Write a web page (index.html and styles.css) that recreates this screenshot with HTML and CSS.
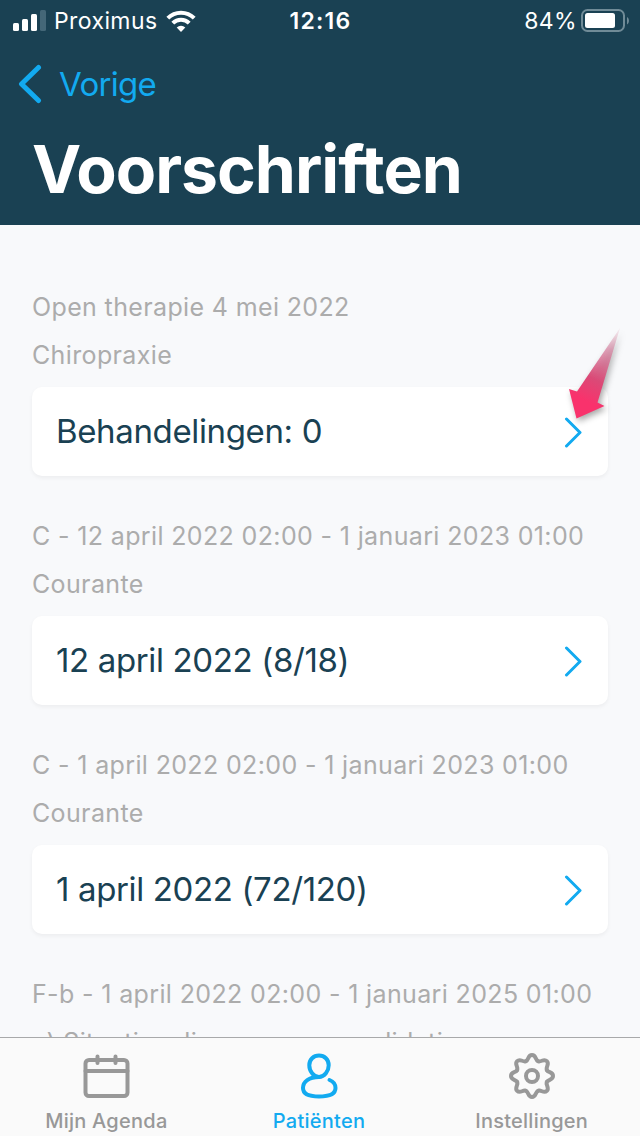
FILE: index.html
```
<!DOCTYPE html>
<html lang="nl">
<head>
  <meta charset="UTF-8">
  <meta name="viewport" content="width=device-width, initial-scale=1.0">
  <title>Voorschriften</title>
  <link rel="stylesheet" href="styles.css">
</head>
<body>
  <header class="header">
    <div class="status-bar">
      <div class="status-left">
        <svg class="signal" width="34" height="22" viewBox="0 0 34 22">
          <rect x="0" y="13" width="6" height="8" rx="1.5"/>
          <rect x="9" y="9" width="6" height="12" rx="1.5"/>
          <rect x="18" y="4" width="6" height="17" rx="1.5"/>
          <rect class="dim" x="27" y="0" width="6" height="21" rx="1.5"/>
        </svg>
        <span class="carrier">Proximus</span>
        <svg class="wifi" width="30" height="22" viewBox="0 0 30 22">
          <path class="wave" d="M1.8 8.2a18.6 18.6 0 0 1 26.4 0"/>
          <path class="wave" d="M6.8 13.2a11.6 11.6 0 0 1 16.4 0"/>
          <path d="M15 22l-4.3-4.4a6.2 6.2 0 0 1 8.6 0z"/>
        </svg>
      </div>
      <span class="time">12:16</span>
      <div class="status-right">
        <span class="percent">84%</span>
        <svg class="battery" width="49" height="24" viewBox="0 0 49 24">
          <rect class="shell" x="1" y="1" width="42" height="21" rx="5.5"/>
          <rect x="4" y="4" width="30" height="15" rx="2.5"/>
          <path class="cap" d="M46 8c2.6 1.5 2.6 6 0 7.500z"/>
        </svg>
      </div>
    </div>
    <a href="#" class="back">
      <svg width="24" height="40" viewBox="0 0 24 40">
        <path d="M20.500 3.500L3.500 20l17 16.500"/>
      </svg>
      <span>Vorige</span>
    </a>
    <h1>Voorschriften</h1>
  </header>

  <main class="content">
    <section class="prescription">
      <p>Open therapie 4 mei 2022</p>
      <p>Chiropraxie</p>
      <a href="#" class="card">
        <span>Behandelingen: 0</span>
        <svg class="chevron" width="20" height="32" viewBox="0 0 20 32"><path d="M3.500 3L17 16.500 3.500 30"/></svg>
        <!-- pointer to the open button -->
        <svg class="pointer" width="70" height="110" viewBox="0 0 70 110">
          <defs>
            <linearGradient id="fade" gradientUnits="userSpaceOnUse" x1="60" y1="8" x2="20" y2="94">
              <stop offset="0" stop-color="#d08aa0" stop-opacity="0.1"/>
              <stop offset="0.25" stop-color="#d5799a" stop-opacity="0.65"/>
              <stop offset="0.6" stop-color="#da4a77"/>
              <stop offset="0.85" stop-color="#f9326c"/>
            </linearGradient>
          </defs>
          <path d="M60 8L37.500 82.500l7 3.500L16.500 98.500 9 69l8 2.500z"/>
        </svg>
      </a>
    </section>

    <section class="prescription">
      <p>C - 12 april 2022 02:00 - 1 januari 2023 01:00</p>
      <p>Courante</p>
      <a href="#" class="card">
        <span>12 april 2022 (8/18)</span>
        <svg class="chevron" width="20" height="32" viewBox="0 0 20 32"><path d="M3.500 3L17 16.500 3.500 30"/></svg>
      </a>
    </section>

    <section class="prescription">
      <p>C - 1 april 2022 02:00 - 1 januari 2023 01:00</p>
      <p>Courante</p>
      <a href="#" class="card">
        <span>1 april 2022 (72/120)</span>
        <svg class="chevron" width="20" height="32" viewBox="0 0 20 32"><path d="M3.500 3L17 16.500 3.500 30"/></svg>
      </a>
    </section>

    <section class="prescription">
      <p>F-b - 1 april 2022 02:00 - 1 januari 2025 01:00</p>
      <p>a) Situaties die een gangrevalidatie</p>
    </section>
  </main>

  <nav class="tab-bar">
    <a href="#" class="tab">
      <svg width="48" height="48" viewBox="0 0 48 48">
        <rect x="3.500" y="8" width="42" height="36" rx="3.500"/>
        <path d="M3.500 19h42M15.500 4.500v6.500M33.500 4.500v6.500"/>
      </svg>
      <span>Mijn Agenda</span>
    </a>
    <a href="#" class="tab active">
      <svg width="48" height="48" viewBox="0 0 48 48">
        <path d="M24 25C14 25 8 29.500 8 36C8 42 13 44.500 24 44.500S40.500 42 40.500 36C40.500 32.500 38.500 29.500 34.500 28"/>
        <path d="M24 25C18.500 25 14.300 19 14.300 13.200C14.300 7.500 18.500 3.500 24 3.500S33.700 7.500 33.700 13.200C33.700 19 29.500 25 24 25z"/>
      </svg>
      <span>Patiënten</span>
    </a>
    <a href="#" class="tab">
      <svg width="48" height="48" viewBox="-24 -24 48 48">
        <defs><path id="tooth" d="M-6.100 -14.800C-3.100 -16 -4.300 -21 0 -21S3.100 -16 6.100 -14.800"/></defs>
        <use href="#tooth"/>
        <use href="#tooth" transform="rotate(45)"/>
        <use href="#tooth" transform="rotate(90)"/>
        <use href="#tooth" transform="rotate(135)"/>
        <use href="#tooth" transform="rotate(180)"/>
        <use href="#tooth" transform="rotate(225)"/>
        <use href="#tooth" transform="rotate(270)"/>
        <use href="#tooth" transform="rotate(315)"/>
        <circle r="6"/>
      </svg>
      <span>Instellingen</span>
    </a>
  </nav>
</body>
</html>
```
FILE: styles.css
```
* {
  box-sizing: border-box;
}
body {
  display: flex;
  flex-direction: column;
  height: 1136px;
  margin: 0;
  overflow: hidden;
  font-family: Inter, "Liberation Sans", sans-serif;
  background-color: #f8f9fb;
}
a {
  text-decoration: none;
}
svg {
  flex-shrink: 0;
}
.header {
  height: 225px;
  flex-shrink: 0;
  background-color: #1a4153;
  color: white;
}
.status-bar {
  display: grid;
  grid-template-columns: 1fr auto 1fr;
  align-items: center;
  height: 40px;
  padding: 0 10px 0 13px;
  font-size: 23px;
  line-height: 40px;
}
.status-bar span {
  padding-top: 1px;
}
.status-left, .status-right {
  display: flex;
  align-items: center;
  height: 40px;
}
.status-right {
  justify-content: flex-end;
}
.status-bar svg {
  fill: white;
}
.signal .dim {
  fill: #446778;
}
.carrier {
  margin-left: 7px;
  letter-spacing: 0.4px;
}
.wifi {
  margin-left: 9px;
}
.wifi .wave {
  fill: none;
  stroke: white;
  stroke-width: 4;
}
.time {
  font-weight: 600;
  letter-spacing: 1.2px;
  margin-right: 2px;
}
.percent {
  letter-spacing: 0.4px;
}
.battery {
  margin-left: 4px;
}
.battery .shell {
  fill: none;
  stroke: #708b97;
  stroke-width: 2;
}
.battery .cap {
  fill: #708b97;
}
.back {
  display: flex;
  align-items: center;
  gap: 17px;
  height: 88px;
  padding-left: 18px;
  font-size: 33px;
  letter-spacing: -0.7px;
  color: #12aaf0;
}
.back svg {
  fill: none;
  stroke: #12aaf0;
  stroke-width: 5;
  stroke-linecap: round;
  stroke-linejoin: round;
}
h1 {
  margin: 0;
  padding-left: 32px;
  font-size: 66px;
  line-height: 82px;
  font-weight: 700;
  letter-spacing: -1px;
}
.content {
  flex: 1;
  min-height: 0;
  padding: 58px 32px 0;
  overflow: hidden;
}
.prescription {
  height: 229px;
}
.prescription p {
  margin: 0;
  font-size: 25px;
  line-height: 48px;
  letter-spacing: 0.36px;
  color: #acacac;
  white-space: nowrap;
}
.card {
  position: relative;
  display: flex;
  justify-content: space-between;
  align-items: center;
  height: 89px;
  margin-top: 8px;
  padding: 0 25px 0 24px;
  font-size: 33px;
  letter-spacing: -0.36px;
  color: #1a4153;
  background-color: white;
  border-radius: 10px;
  box-shadow: 0 2px 4px rgba(0, 0, 0, 0.05);
}
.card span {
  padding-bottom: 2px;
}
.chevron {
  fill: none;
  stroke: #12aaf0;
  stroke-width: 3;
  stroke-linecap: round;
  stroke-linejoin: round;
}
.pointer {
  position: absolute;
  top: -67px;
  right: -22px;
  fill: url(#fade);
  filter: drop-shadow(2px 3px 3px rgba(0, 0, 0, 0.35));
}
.tab-bar {
  display: grid;
  grid-template-columns: repeat(3, 1fr);
  height: 99px;
  flex-shrink: 0;
  padding-right: 2px;
  border-top: 1px solid #a8a9aa;
  background-color: #fafafa;
}
.tab {
  display: flex;
  flex-direction: column;
  align-items: center;
  padding-top: 14px;
  font-size: 20px;
  font-weight: 500;
  line-height: 42px;
  letter-spacing: 0.25px;
  color: #989898;
}
.tab svg {
  fill: none;
  stroke: #989898;
  stroke-width: 4;
  stroke-linecap: round;
  stroke-linejoin: round;
}
.tab.active {
  color: #12aaf0;
}
.tab.active svg {
  stroke: #12aaf0;
}
```
